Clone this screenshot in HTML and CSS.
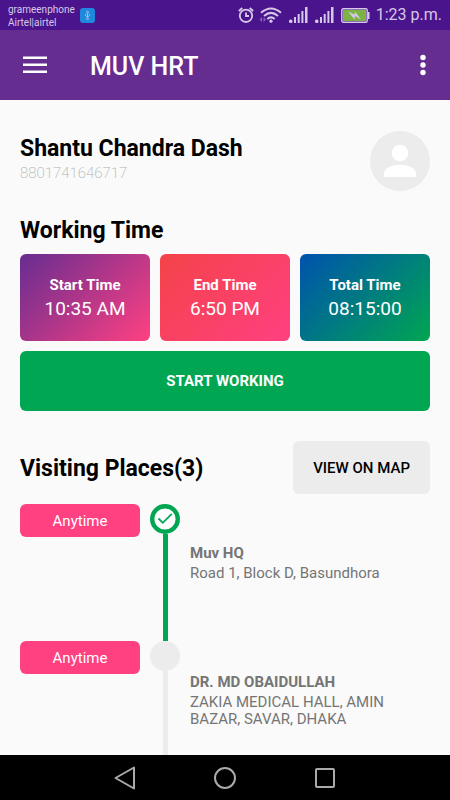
FILE: index.html
```html
<!DOCTYPE html>
<html lang="en">
<head>
<meta charset="utf-8">
<meta name="viewport" content="width=device-width, initial-scale=1">
<title>MUV HRT</title>
<link rel="stylesheet" href="styles.css">
</head>
<body>
<div class="status">
  <div class="carrier"><span>grameenphone</span><span>Airtel|airtel</span></div>
  <svg class="usb" width="15" height="15" viewBox="0 0 15 15"><rect width="15" height="15" rx="3" fill="#2088dc"/><g fill="none" stroke="#8fc4f0"><path d="M7.500 5v5M5.500 6v1.500l2 1.500 2-1.500V6"/><circle cx="7.500" cy="4.200" r="1"/><circle cx="7.500" cy="10.700" r="1"/></g></svg>
  <div class="indicators">
    <svg width="16" height="16" viewBox="0 0 16 16" fill="none" stroke="#d6c8e8" stroke-width="1.800"><circle cx="8" cy="8.800" r="6.200"/><path d="M8 5.500V9h3M.800 4l3.500-3M15.200 4l-3.500-3"/></svg>
    <svg class="wifi" width="23" height="16" viewBox="0 0 23 16" fill="none" stroke="#d6c8e8" stroke-width="2"><path d="M2 5.800Q12 -2.800 22 5.800M5 9Q12 2.800 19 9M8.300 12Q12 8.800 15.700 12"/><circle cx="12" cy="14.200" r="1.600" fill="#d6c8e8" stroke="none"/><path d="M3 10v5L.500 12.500zM4.500 10v5L7 12.500z" fill="#8463b4" stroke="none"/></svg>
    <svg class="signal" width="19" height="16" viewBox="0 0 19 16" fill="#d6c8e8"><rect y="12.500" width="3.500" height="3.500" rx="1.500"/><rect x="5" y="10" width="2" height="6"/><rect x="8.700" y="7" width="2" height="9"/><rect x="12.400" y="4" width="2" height="12"/><rect x="16" y="0" width="2.500" height="16"/></svg>
    <svg class="signal" width="19" height="16" viewBox="0 0 19 16" fill="#d6c8e8"><rect y="12.500" width="3.500" height="3.500" rx="1.500"/><rect x="5" y="10" width="2" height="6"/><rect x="8.700" y="7" width="2" height="9"/><rect x="12.400" y="4" width="2" height="12"/><rect x="16" y="0" width="2.500" height="16"/></svg>
    <svg class="battery" width="29" height="15" viewBox="0 0 29 15"><rect x=".800" y=".800" width="25.400" height="13.400" rx="1.500" fill="#4a148c" stroke="#d6c8e8" stroke-width="1.400"/><rect x="2" y="2" width="23" height="11" fill="#7cb342"/><path d="M27 4h1.500v7H27z" fill="#d6c8e8"/><path d="M7 3.500l6.500 3 .5-3 6 8-6-3.500-.5 3.500z" fill="#d6c8e8"/></svg>
    <time>1:23 p.m.</time>
  </div>
</div>
<header class="appbar">
  <button class="icon-button" aria-label="Menu"><svg width="24" height="18" viewBox="0 0 24 18" fill="#fff"><path d="M0 .500h24V3H0zM0 7.500h24V10H0zM0 14.500h24V17H0z"/></svg></button>
  <h1>MUV HRT</h1>
  <button class="icon-button" aria-label="More options"><svg width="6" height="22" viewBox="0 0 6 22" fill="#fff"><circle cx="3" cy="3.500" r="2.700"/><circle cx="3" cy="11" r="2.700"/><circle cx="3" cy="18.500" r="2.700"/></svg></button>
</header>
<main>
  <section class="profile">
    <div>
      <h2>Shantu Chandra Dash</h2>
      <p class="phone">8801741646717</p>
    </div>
    <svg width="60" height="60" viewBox="0 0 60 60"><circle cx="30" cy="30" r="30" fill="#ececec"/><circle cx="30" cy="22" r="8.300" fill="#fff"/><path d="M14 46v-4c0-5 9-8.300 16-8.300s16 3.300 16 8.300v4z" fill="#fff"/></svg>
  </section>
  <section class="working">
    <h2>Working Time</h2>
    <div class="cards">
      <div class="card start"><strong>Start Time</strong><span>10:35 AM</span></div>
      <div class="card end"><strong>End Time</strong><span>6:50 PM</span></div>
      <div class="card total"><strong>Total Time</strong><span>08:15:00</span></div>
    </div>
    <button class="start-button">START WORKING</button>
  </section>
  <section class="places">
    <div class="places-head">
      <h2>Visiting Places(3)</h2>
      <button class="map-button">VIEW ON MAP</button>
    </div>
    <ol>
      <li class="done">
        <span class="when">Anytime</span>
        <div class="track"><svg width="30" height="30" viewBox="0 0 30 30"><circle cx="15" cy="15" r="12.800" fill="#fff" stroke="#00a651" stroke-width="4.400"/><path d="M8.500 14.500l4.300 4.300 9-9" fill="none" stroke="#00a651" stroke-width="1.800"/></svg></div>
        <div class="place"><h3>Muv HQ</h3><p>Road 1, Block D, Basundhora</p></div>
      </li>
      <li>
        <span class="when">Anytime</span>
        <div class="track"><svg width="30" height="30" viewBox="0 0 30 30"><circle cx="15" cy="15" r="15" fill="#ececec"/></svg></div>
        <div class="place"><h3>DR. MD OBAIDULLAH</h3><p>ZAKIA MEDICAL HALL, AMIN BAZAR, SAVAR, DHAKA</p></div>
      </li>
    </ol>
  </section>
</main>
<nav class="navbar">
  <button aria-label="Back"><svg width="24" height="24" viewBox="0 0 24 24"><path d="M21 1.500v21L2.500 12z"/></svg></button>
  <button aria-label="Home"><svg width="24" height="24" viewBox="0 0 24 24"><circle cx="12" cy="12" r="10"/></svg></button>
  <button aria-label="Recent apps"><svg width="24" height="24" viewBox="0 0 24 24"><rect x="3" y="3" width="18" height="18" rx="1"/></svg></button>
</nav>
</body>
</html>
```
FILE: styles.css
```css
* { box-sizing: border-box; }
body {
  margin: 0;
  height: 100vh;
  display: flex;
  flex-direction: column;
  overflow: hidden;
  background: #fafafa;
  color: #000;
  font-family: Roboto, "Liberation Sans", sans-serif;
}
h1, h2, h3, p, ol { margin: 0; padding: 0; }
button { border: 0; padding: 0; font-family: inherit; cursor: pointer; }
svg { display: block; flex: none; }

.status {
  flex: none;
  height: 30px;
  padding: 0 8px;
  display: flex;
  align-items: center;
  background: #4a148c;
  color: #d6c8e8;
}
.carrier { display: flex; flex-direction: column; padding-top: 2px; font-size: 10px; line-height: 13px; }
.usb { margin-left: 5px; }
.indicators { margin-left: auto; display: flex; align-items: center; }
.wifi { margin-left: 5px; }
.signal { margin-left: 7px; }
.battery { margin-left: 7px; }
.indicators time { margin-left: 6px; font-size: 16px; line-height: 20px; }

.appbar {
  flex: none;
  height: 70px;
  padding: 0 20px;
  display: flex;
  align-items: center;
  background: #662d91;
  color: #fff;
}
.appbar h1 { flex: 1; margin-left: 40px; padding-top: 3px; font-size: 25px; line-height: 30px; font-weight: 500; }
.icon-button { height: 40px; display: flex; align-items: center; justify-content: center; min-width: 15px; background: none; }
.icon-button:first-child { width: 30px; }

main { flex: 1; min-height: 0; overflow: hidden; padding: 31px 20px 0; }
h2 { padding-top: 2px; font-size: 23px; line-height: 31px; font-weight: 700; }
.profile { display: flex; justify-content: space-between; }
.phone { font-size: 15px; line-height: 19px; font-weight: 200; color: #b0b0b0; }
.working { margin-top: 22px; }
.cards { display: grid; grid-template-columns: repeat(3, 1fr); gap: 10px; margin: 8px 0 10px; }
.card {
  display: flex;
  flex-direction: column;
  align-items: center;
  padding: 20px 0 19px;
  border-radius: 6px;
  color: #fff;
}
.card strong { font-size: 15px; line-height: 22px; }
.card span { font-size: 19px; line-height: 26px; }
.start { background: linear-gradient(135deg, #662d91, #ff4081); }
.end { background: linear-gradient(135deg, #f44349, #ff4081); }
.total { background: linear-gradient(135deg, #0052ae, #00a651); }
.start-button {
  width: 100%;
  height: 60px;
  border-radius: 6px;
  background: #00a651;
  color: #fff;
  font-size: 15px;
  font-weight: 700;
}
.places { margin-top: 30px; }
.places-head { display: flex; align-items: center; justify-content: space-between; }
.map-button { height: 53px; padding: 0 20px; border-radius: 6px; background: #ececec; color: #000; font-size: 15px; font-weight: 500; }
ol { list-style: none; margin-top: 10px; }
li { display: grid; grid-template-columns: 120px 30px 1fr; gap: 10px; min-height: 137px; }
.when {
  height: 33px;
  border-radius: 6px;
  background: #ff4081;
  color: #fff;
  font-size: 15px;
  line-height: 35px;
  text-align: center;
}
.track { display: flex; flex-direction: column; align-items: center; }
.track::after { content: ""; flex: 1; width: 5px; background: #ececec; }
.done .track::after { background: #00a651; }
.place { padding-top: 31px; color: #757575; }
.done .place { padding-top: 39px; }
.place h3 { font-size: 15px; line-height: 20px; font-weight: 700; }
.place p { font-size: 15px; line-height: 17px; margin-top: 2px; }

.navbar { flex: none; height: 45px; display: flex; justify-content: center; align-items: center; gap: 76px; background: #000; }
.navbar button { background: none; }
.navbar svg { fill: none; stroke: #aaa; stroke-width: 2; stroke-linejoin: round; }
```
